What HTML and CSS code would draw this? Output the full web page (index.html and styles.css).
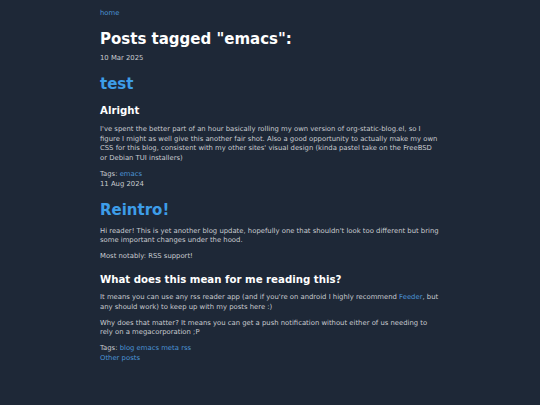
FILE: index.html
```html
<!DOCTYPE html>
<html>
<head>
<meta charset="utf-8">
<link rel="stylesheet" href="styles.css">
</head>
<body>
<div class="page">
  <nav class="nav"><a href="#">home</a></nav>
  <h1 class="page-title">Posts tagged "emacs":</h1>

  <article class="post">
    <div class="date">10 Mar 2025</div>
    <h2 class="post-title"><a href="#">test</a></h2>
    <h3 class="sub">Alright</h3>
    <p>I've spent the better part of an hour basically rolling my own version of org-static-blog.el, so I figure I might as well give this another fair shot. Also a good opportunity to actually make my own CSS for this blog, consistent with my other sites' visual design (kinda pastel take on the FreeBSD or Debian TUI installers)</p>
    <div class="tags">Tags: <a href="#">emacs</a></div>
  </article>

  <article class="post">
    <div class="date">11 Aug 2024</div>
    <h2 class="post-title"><a href="#">Reintro!</a></h2>
    <p>Hi reader! This is yet another blog update, hopefully one that shouldn't look too different but bring some important changes under the hood.</p>
    <p>Most notably: RSS support!</p>
    <h3 class="sub">What does this mean for me reading this?</h3>
    <p>It means you can use any rss reader app (and if you're on android I highly recommend <a href="#">Feeder</a>, but any should work) to keep up with my posts here :)</p>
    <p>Why does that matter? It means you can get a push notification without either of us needing to rely on a megacorporation ;P</p>
    <div class="tags">Tags: <a href="#">blog</a> <a href="#">emacs</a> <a href="#">meta</a> <a href="#">rss</a></div>
  </article>

  <div class="other"><a href="#">Other posts</a></div>
</div>
</body>
</html>
```
FILE: styles.css
```css
html, body {
  margin: 0;
  padding: 0;
  background: #1e2837;
}
body {
  font-family: "DejaVu Sans", Verdana, sans-serif;
  font-size: 6.85px;
  line-height: 9.7px;
  color: #c8cbd0;
}
a {
  color: #4b93d6;
  text-decoration: none;
}
.page {
  width: 340px;
  margin: 0 auto;
  padding: 8.5px 0 20px;
}
.nav {
  margin-bottom: 11.8px;
}
.page-title {
  font-size: 15px;
  line-height: 18px;
  color: #ffffff;
  margin: 0 0 5.8px;
}
.post-title {
  font-size: 15px;
  line-height: 20px;
  margin: 10.3px 0 7px;
}
.post-title a {
  color: #3d9de8;
}
.sub {
  font-size: 10.2px;
  line-height: 13px;
  color: #ffffff;
  margin: 10.5px 0 7.5px;
}
p {
  margin: 0 0 6.3px;
}
.tags a {
  color: #4b93d6;
}
```
